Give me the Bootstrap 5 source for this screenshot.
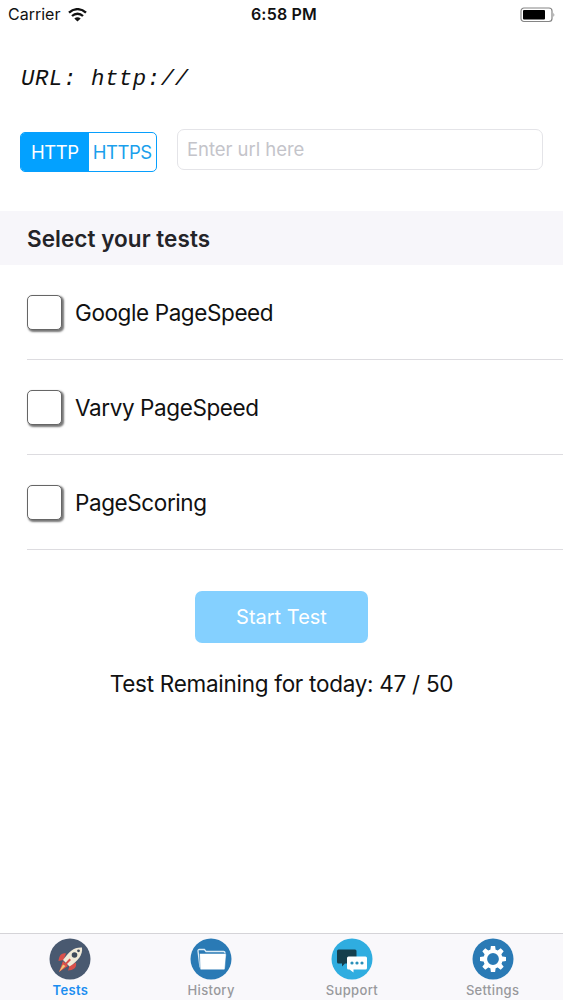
<!DOCTYPE html>
<html lang="en">
<head>
<meta charset="utf-8">
<meta name="viewport" content="width=device-width, initial-scale=1">
<title>Page speed tests</title>
<link href="https://cdn.jsdelivr.net/npm/bootstrap@5.3.0/dist/css/bootstrap.min.css" rel="stylesheet">
<style>
  body { font-family: Inter, "Liberation Sans", sans-serif; color: #111; background: #fff; overflow: hidden; }
  .status-bar { height: 29px; padding: 0 8px 0 8px; font-size: 16px; line-height: 29px; }
  .status-bar > div { flex: 1 1 0; }
  .clock { font-weight: 600; letter-spacing: .2px; padding-left: 5px; }
  .url-line { height: 100px; padding: 36px 21px 0; font: italic 22.3px/29px "Liberation Mono", monospace; letter-spacing: .6px; }
  .entry-row { height: 82px; padding: 0 20px; gap: 20px; }
  .scheme { width: 137px; height: 40px; margin-top: 3px; border: 1.5px solid #079ffd; border-radius: 5px; overflow: hidden; }
  .scheme .btn { flex: 1 1 0; padding: 0; border: 0; border-radius: 0; font-size: 18.5px; line-height: 37px; letter-spacing: -.5px; color: #1b9fec; }
  .scheme .btn.active { background: #03a1ff; color: #fff; }
  .url-input.form-control { height: 41px; padding: 0 9px 2px; font-size: 18.5px; letter-spacing: -.05px; border: 1px solid #e4e4e8; border-radius: 7px; }
  .url-input::placeholder { color: #c4c4ca; opacity: 1; }
  .section-head { height: 54px; padding-left: 27px; margin: 0; background: #f7f6fa; font-size: 22.5px; font-weight: 600; line-height: 56px; color: #242428; letter-spacing: .05px; }
  .tests { padding-left: 27px; }
  .test-row { height: 95px; border-bottom: 1px solid #dddce0; font-size: 22.5px; letter-spacing: -.4px; gap: 13px; }
  .test-row span { padding-top: 2px; }
  .test-row .form-check-input { width: 35px; height: 35px; margin: 0; border: 1.5px solid #666; border-radius: 5px; box-shadow: 1.5px 1.5px 2px #777; }
  .start.btn { width: 173px; height: 52px; padding: 0; margin-top: 41px; background: #84d0ff; border: 0; border-radius: 7px; color: #fff; font-size: 20px; }
  .remaining { margin-top: 24px; font-size: 22.5px; line-height: 33px; letter-spacing: -.28px; }
  .tab-bar { height: 67px; border-top: 1.5px solid #d5d4d8; background: #f9f8fb; }
  .tab-bar a { flex: 1 1 0; padding-top: 4px; color: #98989c; text-decoration: none; font-size: 13px; font-weight: 500; line-height: 21px; letter-spacing: .35px; }
  .tab-bar a.active { color: #1b8df0; font-weight: 600; }
  .tab-bar svg { width: 42px; height: 42px; flex-shrink: 0; }
</style>
</head>
<body>
<div class="vh-100 d-flex flex-column">
  <header class="status-bar d-flex align-items-center">
    <div class="d-flex align-items-center"><span>Carrier</span>
      <svg class="ms-2" width="19" height="14" viewBox="0 0 19 14" fill="none" stroke="#111" stroke-width="2.3"><path d="M1 4.7C6-.1 13-.1 18 4.7M4 8c3.2-3 7.8-3 11 0"/><path d="M9.500 13.500L6.300 10.500Q9.500 8 12.700 10.500Z" fill="#111" stroke="none"/></svg>
    </div>
    <div class="clock text-center">6:58 PM</div>
    <div class="d-flex justify-content-end"><svg width="35" height="16" viewBox="0 0 35 16"><rect x="1" y="1" width="31" height="13.500" rx="3" fill="#fff" stroke="#858585" stroke-width="1.200"/><rect x="3" y="3" width="22" height="9.500" rx="1" fill="#000"/><path d="M33.500 5.500q1.500 2 0 4.500z" fill="#777"/></svg></div>
  </header>
  <main class="flex-grow-1">
    <div class="url-line">URL: http://</div>
    <div class="entry-row d-flex align-items-start">
      <div class="scheme d-flex flex-shrink-0" role="group">
        <button class="btn active" type="button">HTTP</button><button class="btn" type="button">HTTPS</button>
      </div>
      <input class="form-control url-input" type="text" placeholder="Enter url here">
    </div>
    <h2 class="section-head">Select your tests</h2>
    <div class="tests">
      <label class="test-row d-flex align-items-center"><input class="form-check-input" type="checkbox"><span>Google PageSpeed</span></label>
      <label class="test-row d-flex align-items-center"><input class="form-check-input" type="checkbox"><span>Varvy PageSpeed</span></label>
      <label class="test-row d-flex align-items-center"><input class="form-check-input" type="checkbox"><span>PageScoring</span></label>
    </div>
    <div class="text-center">
      <button class="btn start" type="button">Start Test</button>
      <div class="remaining">Test Remaining for today: 47 / 50</div>
    </div>
  </main>
  <nav class="tab-bar d-flex flex-shrink-0">
    <a class="active d-flex flex-column align-items-center" href="#">
      <svg viewBox="0 0 42 42"><circle cx="21" cy="21" r="20.500" fill="#495970"/><path d="M17 15.500c-5-1-7 3-7.500 7.500l5-1zM27 24.500c1 6-3 7.500-8 8l1.500-4.500z" fill="#d94f4a"/><path d="M14 23l5 5-9 6z" fill="#e0504a"/><path d="M33 9.500c-8-.5-13 4-19 12.500l6.500 6.500C29 23 34 17 33 9.500z" fill="#f1ead8"/><circle cx="25.500" cy="17" r="2.800" fill="#3f4b5b"/><circle cx="29.500" cy="12.800" r="1.400" fill="#3f4b5b"/><path d="M20.500 20.500l1.500 1.500-11.500 11.500q4-7.500 10-13z" fill="#d94f4a"/><path d="M14 26.500l2.500 1.500-6.500 6z" fill="#f0c878"/></svg>
      <span>Tests</span></a>
    <a class="d-flex flex-column align-items-center" href="#">
      <svg viewBox="0 0 42 42"><circle cx="21" cy="21" r="20.500" fill="#2a7ab5"/><path d="M10 29.500L8 13q-.1-1.500 1.400-1.500h5l1.600 2h17.500q1.500 0 1.500 1.500v1" fill="none" stroke="#dcecf6" stroke-width="1.300"/><path d="M9.500 16.500q-.1-1 1-1h24.500q1.300 0 1.200 1.200L35 30.500q-.1 1.300-1.400 1.300H11.200q-1.200 0-1.100-1.300z" fill="#fff" stroke="#2a7ab5" stroke-width=".5"/></svg>
      <span>History</span></a>
    <a class="d-flex flex-column align-items-center" href="#">
      <svg viewBox="0 0 42 42"><circle cx="21" cy="21" r="20.500" fill="#2fade0"/><path d="M7.500 11.500h16.500q1.500 0 1.500 1.500v11q0 1.500-1.500 1.500h-10l-3 3v-3H7.500q-1.500 0-1.500-1.500V13q0-1.500 1.500-1.500z" fill="#153f4d"/><path d="M17.500 18.500h17q1.500 0 1.500 1.500v10q0 1.500-1.500 1.500h-12l0 3-4-3h-1q-1.500 0-1.500-1.500V20q0-1.500 1.500-1.500z" fill="#fff"/><g fill="#2a8fb9"><circle cx="21" cy="25" r="1.600"/><circle cx="26" cy="25" r="1.600"/><circle cx="31" cy="25" r="1.600"/></g></svg>
      <span>Support</span></a>
    <a class="d-flex flex-column align-items-center" href="#">
      <svg viewBox="0 0 42 42"><circle cx="21" cy="21" r="20.500" fill="#2a7ab5"/><g transform="translate(21 21)"><g fill="#fff"><g id="teeth"><path id="tooth" d="M-2.800-8l.7-5h4.200l.7 5zM-2.800 8l.7 5h4.200l.7-5z"/><use href="#tooth" transform="rotate(90)"/></g><use href="#teeth" transform="rotate(45)"/></g><circle r="7.800" fill="none" stroke="#fff" stroke-width="3.800"/></g></svg>
      <span>Settings</span></a>
  </nav>
</div>
<script src="https://cdn.jsdelivr.net/npm/bootstrap@5.3.0/dist/js/bootstrap.bundle.min.js"></script>
</body>
</html>
